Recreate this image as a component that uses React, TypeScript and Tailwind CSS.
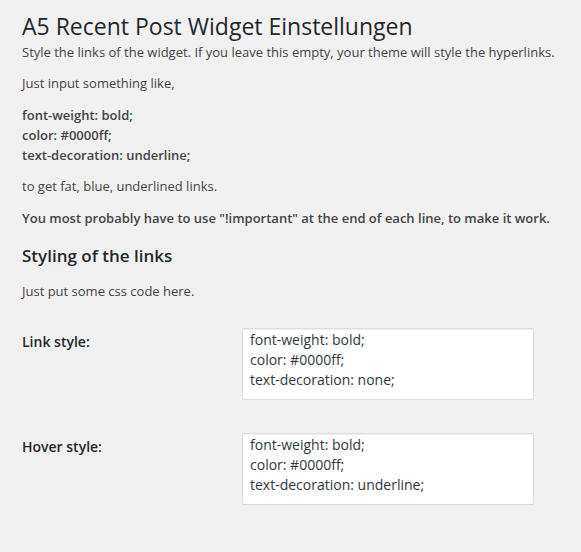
export default function App() {
  return (
    <div className="min-h-screen bg-[#f1f1f1] font-['Open_Sans',sans-serif] text-[13px] leading-[20px] text-[#444]">
      <div className="pl-[22px] pr-5 pt-[12px]">
        <h1 className="text-[23px] leading-[29px] font-normal text-[#23282d] pb-[1px]">
          A5 Recent Post Widget Einstellungen
        </h1>
        <p>Style the links of the widget. If you leave this empty, your theme will style the hyperlinks.</p>
        <p className="mt-[11px]">Just input something like,</p>
        <p className="mt-[12px] font-semibold">
          font-weight: bold;
          <br />
          color: #0000ff;
          <br />
          text-decoration: underline;
        </p>
        <p className="mt-[11px]">to get fat, blue, underlined links.</p>
        <p className="mt-[12px] font-semibold">
          You most probably have to use "!important" at the end of each line, to make it work.
        </p>
        <h2 className="mt-[16px] text-[17px] leading-[24px] font-semibold text-[#23282d]">Styling of the links</h2>
        <p className="mt-[13px]">Just put some css code here.</p>

        <div className="mt-[11px]">
          <StyleRow label="Link style:" value={"font-weight: bold;\ncolor: #0000ff;\ntext-decoration: none;"} />
          <StyleRow label="Hover style:" value={"font-weight: bold;\ncolor: #0000ff;\ntext-decoration: underline;"} />
        </div>
      </div>
    </div>
  );
}

function StyleRow({ label, value }: { label: string; value: string }) {
  return (
    <div className="flex pt-[16px] pb-[17px]">
      <div className="w-[210px] pt-[4px] font-semibold text-[14px] text-[#23282d]">{label}</div>
      <div className="px-[10px]">
        <textarea
          readOnly
          defaultValue={value}
          className="block w-[292px] h-[72px] resize-none border border-[#ddd] bg-white px-[7px] py-[1px] text-[14px] leading-[20px] text-[#32373c] shadow-[inset_0_1px_2px_rgba(0,0,0,0.07)] outline-none font-['Open_Sans',sans-serif]"
        />
      </div>
    </div>
  );
}
